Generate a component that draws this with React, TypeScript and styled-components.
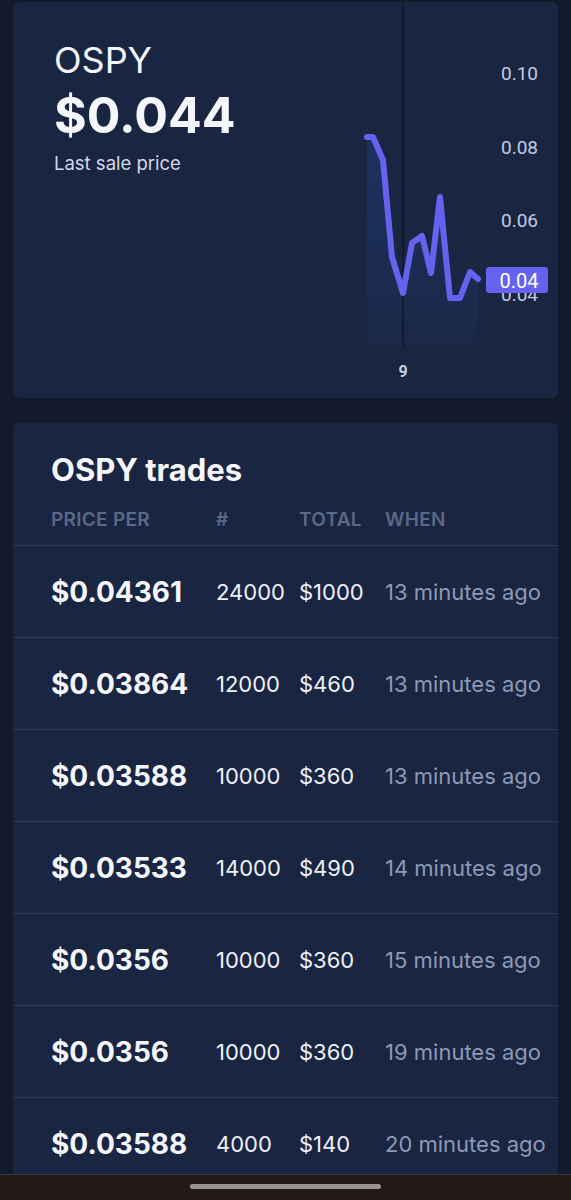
import React from "react";
import styled, { createGlobalStyle } from "styled-components";

const GlobalStyle = createGlobalStyle`
  * { box-sizing: border-box; }
  html, body { margin: 0; padding: 0; background: #121a2d; }
  body {
    font-family: Inter, "Noto Sans", sans-serif;
    color: #f4f6fb;
    height: 1200px;
    overflow: hidden;
  }
`;

const Page = styled.div`
  display: flex;
  flex-direction: column;
  height: 1200px;
  padding-top: 2px;
`;

const Card = styled.section`
  margin: 0 13px;
  background: #1a2542;
  border-radius: 6px;
`;

const PriceCard = styled(Card)`
  display: flex;
  justify-content: space-between;
  height: 396px;
`;

const Summary = styled.div`
  padding: 38px 0 0 41px;
  display: flex;
  flex-direction: column;
`;

const Symbol = styled.div`
  font-size: 36px;
  line-height: 40px;
  font-weight: 400;
`;

const BigPrice = styled.div`
  margin-top: 6px;
  font-size: 50px;
  line-height: 58px;
  font-weight: 700;
`;

const Caption = styled.div`
  margin-top: 7px;
  font-size: 18.5px;
  line-height: 24px;
  color: #d3d8e6;
`;

const ChartSvg = styled.svg`
  width: 218px;
  height: 396px;
  flex-shrink: 0;
  font-family: Roboto, sans-serif;
`;

const TradesCard = styled(Card)`
  margin-top: 25px;
  flex: 1;
  border-radius: 6px 6px 0 0;
  overflow: hidden;
`;

const Title = styled.h2`
  margin: 0;
  padding: 30px 0 0 38px;
  font-size: 31px;
  line-height: 34px;
  font-weight: 700;
`;

const Grid = styled.div`
  display: grid;
  grid-template-columns: 165px 83px 86px 1fr;
  align-items: center;
  padding-left: 38px;
`;

const HeadRow = styled(Grid)`
  margin-top: 23px;
  padding-bottom: 15px;
  border-bottom: 1px solid #2a3960;
`;

const HeadCell = styled.div`
  font-size: 19px;
  line-height: 20px;
  font-weight: 600;
  color: #5b6888;
  letter-spacing: 0.3px;
`;

const Row = styled(Grid)`
  height: 92px;
  border-bottom: 1px solid #2a3960;
`;

const Cell = styled.div<{ $muted?: boolean }>`
  font-size: 22px;
  color: ${(p) => (p.$muted ? "#8d99b6" : "#eef1f7")};
  white-space: nowrap;
`;

const PriceCell = styled.div`
  font-size: 28px;
  font-weight: 700;
  color: #f4f6fb;
  white-space: nowrap;
`;

const NavBar = styled.div`
  height: 26px;
  flex-shrink: 0;
  background: #231a17;
  border-top: 1px solid #3a3940;
  display: flex;
  justify-content: center;
  padding-top: 9px;
`;

const Handle = styled.div`
  width: 191px;
  height: 5px;
  border-radius: 3px;
  background: #9a9494;
`;

const trades = [
  { price: "$0.04361", qty: "24000", total: "$1000", when: "13 minutes ago" },
  { price: "$0.03864", qty: "12000", total: "$460", when: "13 minutes ago" },
  { price: "$0.03588", qty: "10000", total: "$360", when: "13 minutes ago" },
  { price: "$0.03533", qty: "14000", total: "$490", when: "14 minutes ago" },
  { price: "$0.0356", qty: "10000", total: "$360", when: "15 minutes ago" },
  { price: "$0.0356", qty: "10000", total: "$360", when: "19 minutes ago" },
  { price: "$0.03588", qty: "4000", total: "$140", when: "20 minutes ago" },
];

const points: [number, number][] = [
  [367, 137],
  [373, 137],
  [383, 160],
  [392, 257],
  [403, 293],
  [412, 243],
  [422, 236],
  [431, 273],
  [440, 197],
  [450, 298],
  [460, 298],
  [470, 272],
  [478, 279],
];

const Chart = () => {
  const line = points.map(([x, y]) => `${x},${y}`).join(" ");
  const area = `M367,345 L${line.replace(/ /g, " L")} L478,345 Z`;
  const ticks = [
    { label: "0.10", y: 73 },
    { label: "0.08", y: 147 },
    { label: "0.06", y: 220 },
    { label: "0.04", y: 294 },
  ];
  return (
    <ChartSvg viewBox="340 2 218 396">
      <defs>
        <linearGradient id="fade" x1="0" y1="0" x2="0" y2="1">
          <stop offset="0" stopColor="#1d3466" stopOpacity="0.9" />
          <stop offset="1" stopColor="#1d3466" stopOpacity="0.15" />
        </linearGradient>
      </defs>
      <path d={area} fill="url(#fade)" />
      <line x1="403" y1="2" x2="403" y2="347" stroke="#0f1729" strokeWidth="1.5" />
      <polyline
        points={line}
        fill="none"
        stroke="#6563ee"
        strokeWidth="6"
        strokeLinejoin="round"
        strokeLinecap="round"
      />
      {ticks.map((t) => (
        <text key={t.label + t.y} x="538" y={t.y} textAnchor="end" dominantBaseline="central" fontSize="19" fill="#c5cbdf">
          {t.label}
        </text>
      ))}
      <rect x="486" y="267" width="62" height="26" rx="3" fill="#6563ee" />
      <text x="519" y="281" textAnchor="middle" dominantBaseline="central" fontSize="20" fill="#ffffff">
        0.04
      </text>
      <text x="403" y="371" textAnchor="middle" dominantBaseline="central" fontSize="16" fontWeight="700" fill="#c6ccda">
        9
      </text>
    </ChartSvg>
  );
};

const App = () => {
  return (
    <Page>
      <GlobalStyle />
      <PriceCard>
        <Summary>
          <Symbol>OSPY</Symbol>
          <BigPrice>$0.044</BigPrice>
          <Caption>Last sale price</Caption>
        </Summary>
        <Chart />
      </PriceCard>
      <TradesCard>
        <Title>OSPY trades</Title>
        <HeadRow>
          <HeadCell>PRICE PER</HeadCell>
          <HeadCell>#</HeadCell>
          <HeadCell>TOTAL</HeadCell>
          <HeadCell>WHEN</HeadCell>
        </HeadRow>
        {trades.map((t, i) => (
          <Row key={i}>
            <PriceCell>{t.price}</PriceCell>
            <Cell>{t.qty}</Cell>
            <Cell>{t.total}</Cell>
            <Cell $muted>{t.when}</Cell>
          </Row>
        ))}
      </TradesCard>
      <NavBar>
        <Handle />
      </NavBar>
    </Page>
  );
};

export default App;
